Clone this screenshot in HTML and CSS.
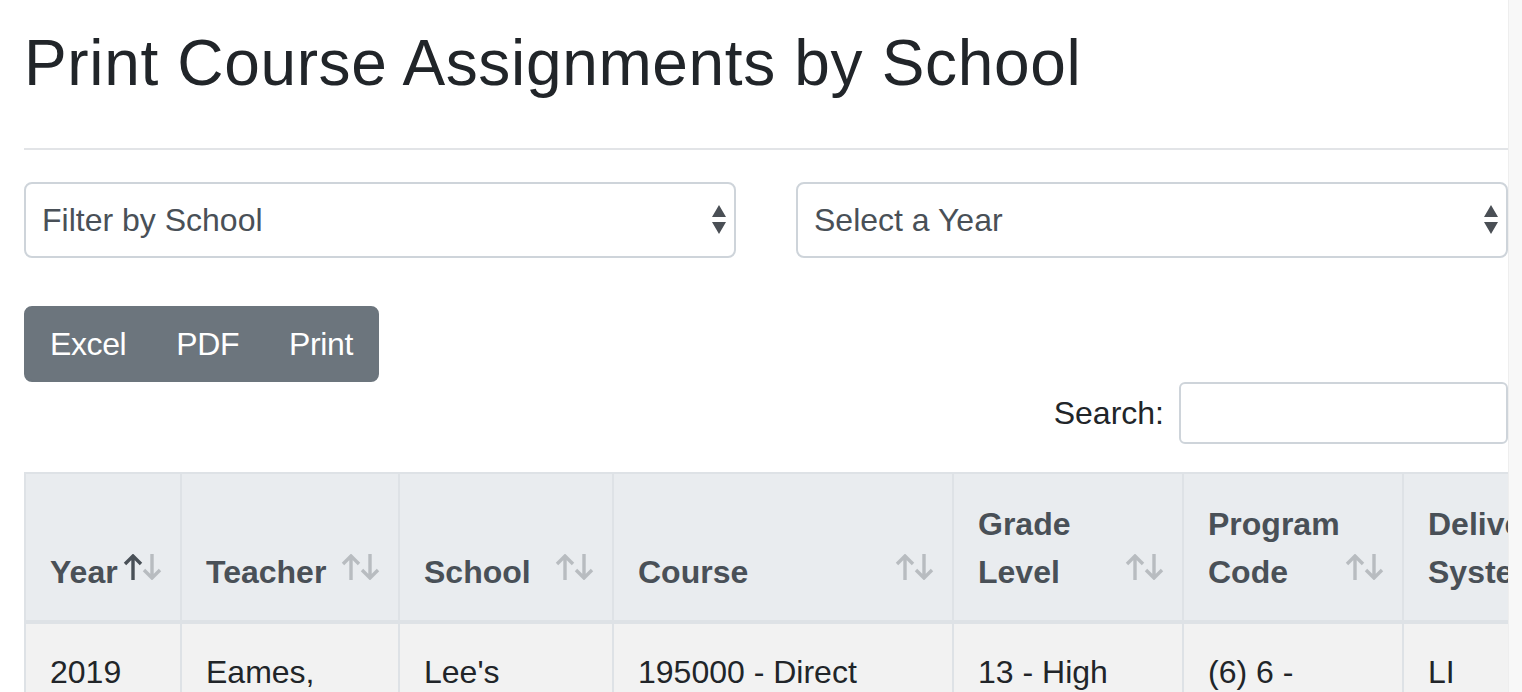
FILE: index.html
```html
<!DOCTYPE html>
<html lang="en">
<head>
<meta charset="utf-8">
<title>Print Course Assignments by School</title>
<link rel="stylesheet" href="styles.css">
</head>
<body>
<div class="page">
  <h1 class="title">Print Course Assignments by School</h1>
  <hr class="rule">
  <div class="filters">
    <div class="select-wrap">
      <select class="custom-select"><option>Filter by School</option></select>
      <svg class="select-arrows" width="16" height="30" viewBox="0 0 16 30"><path d="M8 0 L15 12 L1 12 Z M1 17 L15 17 L8 29 Z" fill="#4a4f55"/></svg>
    </div>
    <div class="select-wrap">
      <select class="custom-select"><option>Select a Year</option></select>
      <svg class="select-arrows" width="16" height="30" viewBox="0 0 16 30"><path d="M8 0 L15 12 L1 12 Z M1 17 L15 17 L8 29 Z" fill="#4a4f55"/></svg>
    </div>
  </div>
  <div class="btn-group">
    <button class="btn">Excel</button>
    <button class="btn">PDF</button>
    <button class="btn">Print</button>
  </div>
  <div class="search-row">
    <label class="search-label">Search:</label>
    <input class="search-input" type="search">
  </div>
  <div class="table-wrap">
    <table class="data-table">
      <colgroup>
        <col class="c1"><col class="c2"><col class="c3"><col class="c4"><col class="c5"><col class="c6"><col class="c7">
      </colgroup>
      <thead>
        <tr>
          <th>Year
            <svg class="sort up active" width="20" height="26" viewBox="0 0 20 26"><path d="M2 10 L10 2 L18 10 M10 3 L10 26" fill="none" stroke="currentColor" stroke-width="3.4"/></svg>
            <svg class="sort down" width="20" height="26" viewBox="0 0 20 26"><path d="M2 16 L10 24 L18 16 M10 23 L10 0" fill="none" stroke="currentColor" stroke-width="3.4"/></svg>
          </th>
          <th>Teacher
            <svg class="sort up" width="20" height="26" viewBox="0 0 20 26"><path d="M2 10 L10 2 L18 10 M10 3 L10 26" fill="none" stroke="currentColor" stroke-width="3.4"/></svg>
            <svg class="sort down" width="20" height="26" viewBox="0 0 20 26"><path d="M2 16 L10 24 L18 16 M10 23 L10 0" fill="none" stroke="currentColor" stroke-width="3.4"/></svg>
          </th>
          <th>School
            <svg class="sort up" width="20" height="26" viewBox="0 0 20 26"><path d="M2 10 L10 2 L18 10 M10 3 L10 26" fill="none" stroke="currentColor" stroke-width="3.4"/></svg>
            <svg class="sort down" width="20" height="26" viewBox="0 0 20 26"><path d="M2 16 L10 24 L18 16 M10 23 L10 0" fill="none" stroke="currentColor" stroke-width="3.4"/></svg>
          </th>
          <th>Course
            <svg class="sort up" width="20" height="26" viewBox="0 0 20 26"><path d="M2 10 L10 2 L18 10 M10 3 L10 26" fill="none" stroke="currentColor" stroke-width="3.4"/></svg>
            <svg class="sort down" width="20" height="26" viewBox="0 0 20 26"><path d="M2 16 L10 24 L18 16 M10 23 L10 0" fill="none" stroke="currentColor" stroke-width="3.4"/></svg>
          </th>
          <th>Grade Level
            <svg class="sort up" width="20" height="26" viewBox="0 0 20 26"><path d="M2 10 L10 2 L18 10 M10 3 L10 26" fill="none" stroke="currentColor" stroke-width="3.4"/></svg>
            <svg class="sort down" width="20" height="26" viewBox="0 0 20 26"><path d="M2 16 L10 24 L18 16 M10 23 L10 0" fill="none" stroke="currentColor" stroke-width="3.4"/></svg>
          </th>
          <th>Program Code
            <svg class="sort up" width="20" height="26" viewBox="0 0 20 26"><path d="M2 10 L10 2 L18 10 M10 3 L10 26" fill="none" stroke="currentColor" stroke-width="3.4"/></svg>
            <svg class="sort down" width="20" height="26" viewBox="0 0 20 26"><path d="M2 16 L10 24 L18 16 M10 23 L10 0" fill="none" stroke="currentColor" stroke-width="3.4"/></svg>
          </th>
          <th>Delivery System
            <svg class="sort up" width="20" height="26" viewBox="0 0 20 26"><path d="M2 10 L10 2 L18 10 M10 3 L10 26" fill="none" stroke="currentColor" stroke-width="3.4"/></svg>
            <svg class="sort down" width="20" height="26" viewBox="0 0 20 26"><path d="M2 16 L10 24 L18 16 M10 23 L10 0" fill="none" stroke="currentColor" stroke-width="3.4"/></svg>
          </th>
        </tr>
      </thead>
      <tbody>
        <tr class="odd">
          <td>2019</td>
          <td>Eames, Charles</td>
          <td>Lee's Summit High School</td>
          <td>195000 - Direct Instruction Services</td>
          <td>13 - High School</td>
          <td>(6) 6 - Special Education</td>
          <td>LI</td>
        </tr>
      </tbody>
    </table>
  </div>
</div>
<div class="scroll-track"></div>
</body>
</html>
```

FILE: styles.css
```css
* {
  box-sizing: border-box;
}

html, body {
  margin: 0;
  padding: 0;
  background: #fff;
}

body {
  font-family: "Liberation Sans", Arial, Helvetica, sans-serif;
  font-size: 32px;
  line-height: 48px;
  color: #212529;
  overflow: hidden;
}

.page {
  width: 1484px;
  margin-left: 24px;
  padding-top: 25px;
}

.title {
  margin: 0 0 46px;
  font-size: 64px;
  line-height: 76.8px;
  font-weight: 500;
  letter-spacing: 0.65px;
  color: #212529;
}

.rule {
  margin: 0;
  border: 0;
  border-top: 2px solid #e2e4e7;
  height: 0;
}

.filters {
  margin-top: 32px;
  display: grid;
  grid-template-columns: 1fr 1fr;
  column-gap: 60px;
}

.select-wrap {
  position: relative;
}

.custom-select {
  -webkit-appearance: none;
  appearance: none;
  display: block;
  width: 100%;
  height: 76px;
  margin: 0;
  padding: 0 44px 0 16px;
  font-family: inherit;
  font-size: 32px;
  color: #495057;
  background: #fff;
  border: 2px solid #ced4da;
  border-radius: 8px;
  outline: none;
}

.select-arrows {
  position: absolute;
  right: 9px;
  top: 23px;
  pointer-events: none;
}

.btn-group {
  margin-top: 48px;
  display: inline-flex;
}

.btn {
  font-family: inherit;
  font-size: 32px;
  line-height: 48px;
  letter-spacing: -0.4px;
  color: #fff;
  background: #6c757d;
  border: 2px solid #6c757d;
  padding: 12px 24px;
  margin: 0;
  border-radius: 0;
}

.btn + .btn {
  margin-left: -2px;
}

.btn:first-child {
  border-radius: 8px 0 0 8px;
}

.btn:last-child {
  border-radius: 0 8px 8px 0;
}

.search-row {
  display: flex;
  justify-content: flex-end;
  align-items: center;
  gap: 15px;
}

.search-label {
  font-size: 32px;
  line-height: 48px;
  color: #212529;
}

.search-input {
  width: 329px;
  height: 62px;
  margin: 0;
  padding: 8px 16px;
  font-family: inherit;
  font-size: 28px;
  border: 2px solid #ced4da;
  border-radius: 6px;
  background: #fff;
  outline: none;
}

.table-wrap {
  margin-top: 28px;
  overflow: hidden;
  width: 1484px;
}

.data-table {
  table-layout: fixed;
  width: 1610px;
  border-collapse: separate;
  border-spacing: 0;
  border-left: 2px solid #dee2e6;
  border-top: 2px solid #dee2e6;
}

.c1 { width: 156px; }
.c2 { width: 218px; }
.c3 { width: 214px; }
.c4 { width: 340px; }
.c5 { width: 230px; }
.c6 { width: 220px; }
.c7 { width: 230px; }

.data-table th,
.data-table td {
  border-right: 2px solid #dee2e6;
  border-bottom: 2px solid #dee2e6;
  text-align: left;
  line-height: 48px;
}

.data-table th {
  position: relative;
  background: #e9ecef;
  color: #495057;
  font-weight: bold;
  vertical-align: bottom;
  padding: 26px 60px 24px 24px;
  border-bottom-width: 4px;
}

.data-table td {
  background: #f2f2f2;
  color: #212529;
  vertical-align: top;
  padding: 24px;
}

.sort {
  position: absolute;
  bottom: 40px;
  color: #495057;
  opacity: 0.3;
}

.sort.up {
  right: 37px;
}

.sort.down {
  right: 18px;
}

.sort.active {
  opacity: 1;
}

.scroll-track {
  position: fixed;
  top: 0;
  right: 0;
  width: 14px;
  height: 100%;
  background: #f8f8f8;
  border-left: 1px solid #eeeeee;
}
```
